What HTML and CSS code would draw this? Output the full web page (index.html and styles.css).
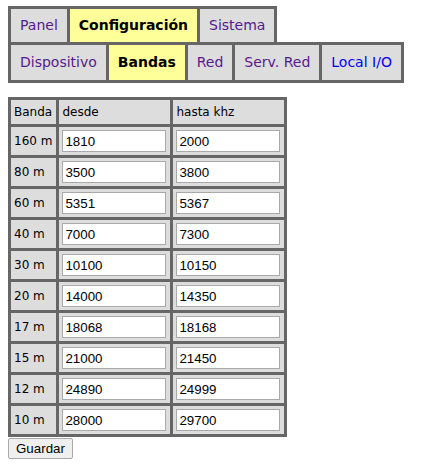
FILE: index.html
```html
<!DOCTYPE html>
<html>
<head>
<meta charset="utf-8">
<link rel="stylesheet" href="styles.css">
</head>
<body>
<nav class="tabs">
  <div class="tab-row">
    <a class="tab visited" href="#">Panel</a>
    <a class="tab active" href="#">Configuración</a>
    <a class="tab visited" href="#">Sistema</a>
  </div>
  <div class="tab-row sub">
    <a class="tab visited" href="#">Dispositivo</a>
    <a class="tab active" href="#">Bandas</a>
    <a class="tab visited" href="#">Red</a>
    <a class="tab visited" href="#">Serv. Red</a>
    <a class="tab link" href="#">Local I/O</a>
  </div>
</nav>
<form class="bands">
  <table class="grid">
    <tr><td>Banda</td><td>desde</td><td>hasta khz</td></tr>
    <tr><td>160 m</td><td><input class="field" value="1810"></td><td><input class="field" value="2000"></td></tr>
    <tr><td>80 m</td><td><input class="field" value="3500"></td><td><input class="field" value="3800"></td></tr>
    <tr><td>60 m</td><td><input class="field" value="5351"></td><td><input class="field" value="5367"></td></tr>
    <tr><td>40 m</td><td><input class="field" value="7000"></td><td><input class="field" value="7300"></td></tr>
    <tr><td>30 m</td><td><input class="field" value="10100"></td><td><input class="field" value="10150"></td></tr>
    <tr><td>20 m</td><td><input class="field" value="14000"></td><td><input class="field" value="14350"></td></tr>
    <tr><td>17 m</td><td><input class="field" value="18068"></td><td><input class="field" value="18168"></td></tr>
    <tr><td>15 m</td><td><input class="field" value="21000"></td><td><input class="field" value="21450"></td></tr>
    <tr><td>12 m</td><td><input class="field" value="24890"></td><td><input class="field" value="24999"></td></tr>
    <tr><td>10 m</td><td><input class="field" value="28000"></td><td><input class="field" value="29700"></td></tr>
  </table>
  <button class="save" type="button">Guardar</button>
</form>
</body>
</html>
```
FILE: styles.css
```css
body {
  margin: 6px 8px 8px 8px;
  font-family: "DejaVu Sans", sans-serif;
  background: #fff;
}
.tabs {
  display: flex;
  flex-direction: column;
  align-items: flex-start;
}
.tab-row {
  display: flex;
}
.tab-row.sub {
  margin-top: -3px;
}
.tab {
  display: block;
  background: #dddddd;
  border: 3px solid #666666;
  margin-left: -3px;
  padding: 0 9px;
  height: 33px;
  line-height: 33px;
  font-size: 14px;
  text-decoration: none;
}
.tab:first-child {
  margin-left: 0;
}
.tab-row.sub .tab {
  height: 35px;
  line-height: 35px;
}
.tab.visited { color: #551a8b; }
.tab.link { color: #0000ee; }
.tab.active {
  background: #ffff99;
  color: #000;
  font-weight: bold;
}
.bands {
  margin-top: 14px;
}
.grid {
  border-collapse: collapse;
  font-size: 12px;
  color: #000;
}
.grid td {
  background: #dddddd;
  border: 3px solid #666666;
  padding: 3px 4px 3px 3px;
  height: 22px;
  line-height: 16px;
}
.grid tr:first-child td {
  height: 18px;
}
.field {
  display: block;
  box-sizing: border-box;
  width: 104px;
  height: 22px;
  margin: 0;
  padding: 1px 2px;
  border: 1px solid #a9a9a9;
  font-family: "Liberation Sans", Arial, sans-serif;
  font-size: 13.33px;
  color: #000;
  background: #fff;
}
.save {
  display: block;
  margin-top: 1px;
  height: 21px;
  padding: 0 7px;
  border: 1px solid #a9a9a9;
  border-radius: 2px;
  background: #efefef;
  font-family: "Liberation Sans", Arial, sans-serif;
  font-size: 13.33px;
  color: #000;
}
```
